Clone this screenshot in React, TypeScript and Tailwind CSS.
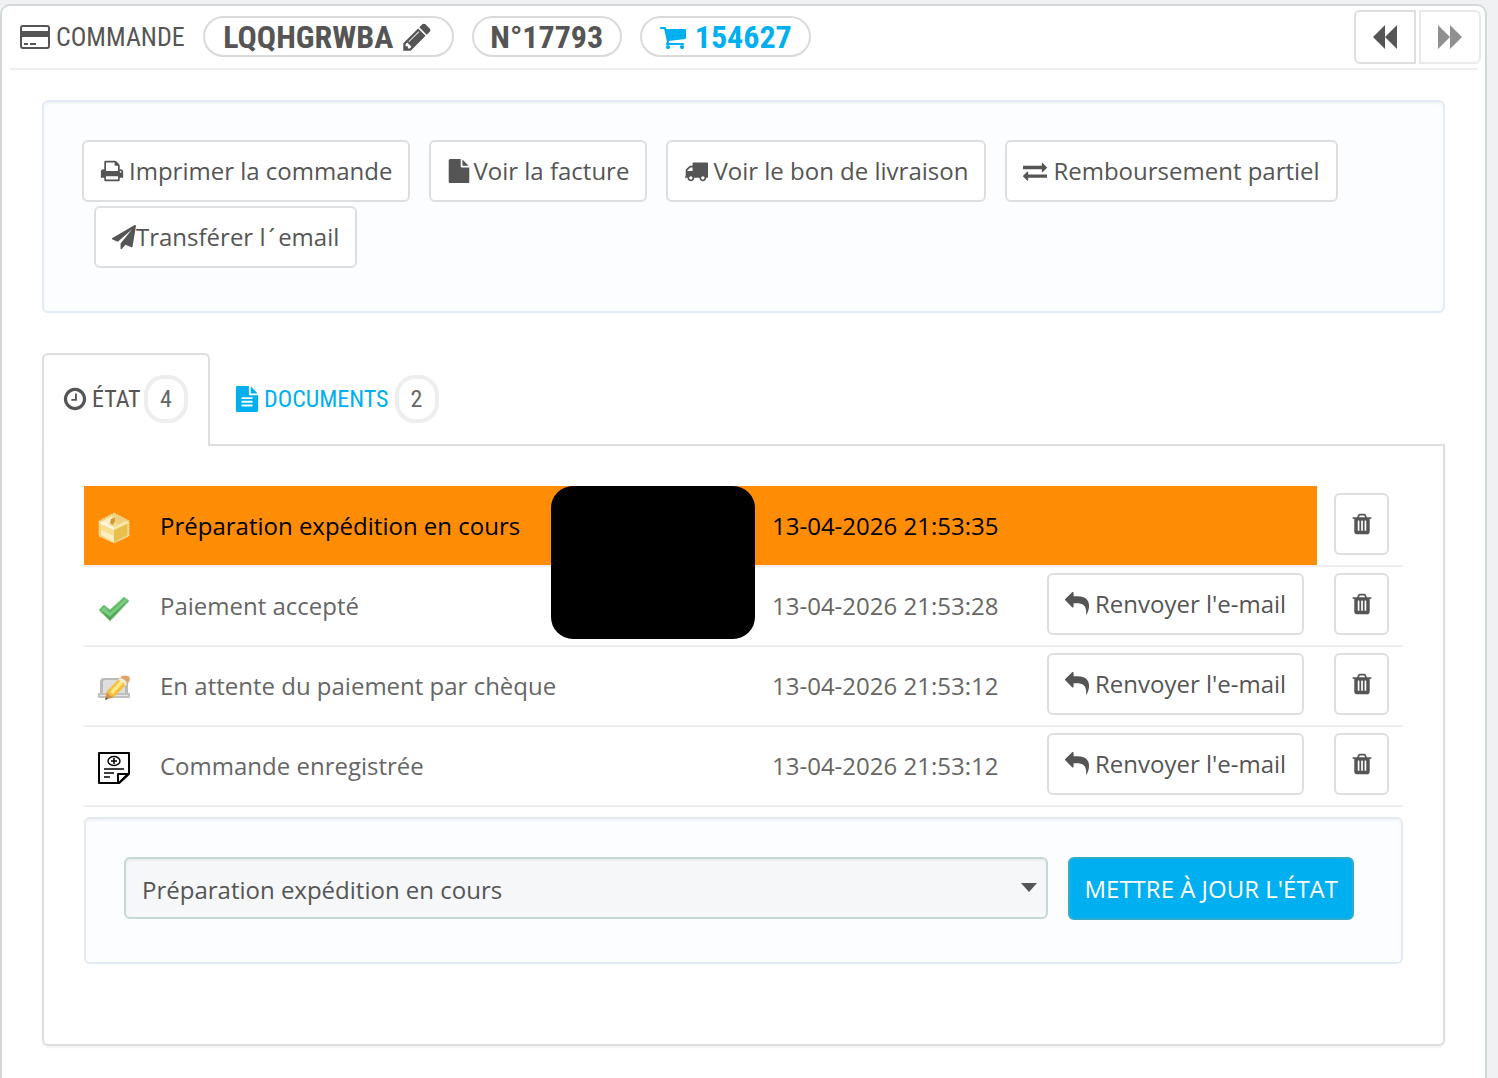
import { useState } from "react";
import type { ReactNode } from "react";

const display = "font-['Ubuntu_Condensed','Roboto_Condensed','Open_Sans_Condensed','Liberation_Sans_Narrow','Open_Sans',sans-serif]";

const glyphs = {
  pencil:
    "M491 1536l91-91-235-235-91 91v107h128v128h107zm523-928q0-22-22-22-10 0-17 7l-542 542q-7 7-7 17 0 22 22 22 10 0 17-7l542-542q7-7 7-17zm-54-192l416 416-832 832h-416v-416zm683 96q0 53-37 90l-166 166-416-416 166-165q36-38 90-38 53 0 91 38l235 234q37 39 37 91z",
  cart:
    "M704 1536q0 52-38 90t-90 38-90-38-38-90 38-90 90-38 90 38 38 90zm896 0q0 52-38 90t-90 38-90-38-38-90 38-90 90-38 90 38 38 90zm128-1088v512q0 24-16.5 42.5t-40.5 21.5l-1044 122q13 60 13 70 0 16-24 64h920q26 0 45 19t19 45-19 45-45 19h-1024q-26 0-45-19t-19-45q0-11 8-31.5t16-36 21.5-40 15.5-29.5l-177-823h-204q-26 0-45-19t-19-45 19-45 45-19h256q16 0 28.5 6.5t19.5 15.5 13 24.5 8 26 5.5 29.5 4.5 26h1201q26 0 45 19t19 45z",
  print:
    "M448 1536h896v-256h-896v256zm0-640h896v-384h-160q-40 0-68-28t-28-68v-160h-640v640zm1152 64q0-26-19-45t-45-19-45 19-19 45 19 45 45 19 45-19 19-45zm128 0v416q0 13-9.5 22.5t-22.5 9.5h-224v160q0 40-28 68t-68 28h-960q-40 0-68-28t-28-68v-160h-224q-13 0-22.5-9.5t-9.5-22.5v-416q0-79 56.5-135.5t135.5-56.5h64v-544q0-40 28-68t68-28h672q40 0 88 20t76 48l152 152q28 28 48 76t20 88v256h64q79 0 135.5 56.5t56.5 135.5z",
  file:
    "M1152 512v-472q22 14 36 28l408 408q14 14 28 36h-472zm-128 32q0 40 28 68t68 28h544v1056q0 40-28 68t-68 28h-1344q-40 0-68-28t-28-68v-1600q0-40 28-68t68-28h800v544z",
  fileText:
    "M1596 476q14 14 28 36h-472v-472q22 14 36 28zm-476 164h544v1056q0 40-28 68t-68 28h-1344q-40 0-68-28t-28-68v-1600q0-40 28-68t68-28h800v544q0 40 28 68t68 28zm160 736v-64q0-14-9-23t-23-9h-704q-14 0-23 9t-9 23v64q0 14 9 23t23 9h704q14 0 23-9t9-23zm0-256v-64q0-14-9-23t-23-9h-704q-14 0-23 9t-9 23v64q0 14 9 23t23 9h704q14 0 23-9t9-23zm0-256v-64q0-14-9-23t-23-9h-704q-14 0-23 9t-9 23v64q0 14 9 23t23 9h704q14 0 23-9t9-23z",
  truck:
    "M640 1408q0-52-38-90t-90-38-90 38-38 90 38 90 90 38 90-38 38-90zm-384-512h384v-256h-158q-13 0-22 9l-195 195q-9 9-9 22v30zm1280 512q0-52-38-90t-90-38-90 38-38 90 38 90 90 38 90-38 38-90zm256-1088v1024q0 15-4 26.5t-13.5 18.5-16.5 11.5-23.5 6-22.5 2-25.5 0-22.5-.5q0 106-75 181t-181 75-181-75-75-181h-384q0 106-75 181t-181 75-181-75-75-181h-64q-3 0-22.5.5t-25.5 0-22.5-2-23.5-6-16.5-11.5-13.5-18.5-4-26.5q0-26 19-45t45-19v-320q0-8-.5-35t0-38 2.5-34.5 6.5-37 14-30.5 22.5-30l198-198q19-19 50.5-32t58.5-13h160v-192q0-26 19-45t45-19h1024q26 0 45 19t19 45z",
  exchange:
    "M1792 1184v192q0 13-9.5 22.5t-22.5 9.5h-1376v192q0 13-9.5 22.5t-22.5 9.5q-12 0-24-10l-319-320q-9-9-9-22 0-14 9-23l320-320q9-9 23-9 13 0 22.5 9.5t9.5 22.5v192h1376q13 0 22.5 9.5t9.5 22.5zm0-544q0 14-9 23l-320 320q-9 9-23 9-13 0-22.5-9.5t-9.5-22.5v-192h-1376q-13 0-22.5-9.5t-9.5-22.5v-192q0-13 9.5-22.5t22.5-9.5h1376v-192q0-14 9-23t23-9q12 0 24 10l319 319q9 9 9 23z",
  plane:
    "M1764 11q33 24 27 64l-256 1536q-5 29-32 45-14 8-31 8-11 0-24-5l-453-185-242 295q-18 23-49 23-13 0-22-4-19-7-30.5-23.5t-11.5-36.5v-349l864-1059-1069 925-395-162q-37-14-40-55-2-40 32-59l1664-960q15-9 32-9 20 0 36 11z",
  clock:
    "M1024 544v448q0 14-9 23t-23 9h-320q-14 0-23-9t-9-23v-64q0-14 9-23t23-9h224v-352q0-14 9-23t23-9h64q14 0 23 9t9 23zm416 352q0-148-73-273t-198-198-273-73-273 73-198 198-73 273 73 273 198 198 273 73 273-73 198-198 73-273zm224 0q0 209-103 385.5t-279.5 279.5-385.5 103-385.5-103-279.5-279.5-103-385.5 103-385.5 279.5-279.5 385.5-103 385.5 103 279.5 279.5 103 385.5z",
  reply:
    "M1792 1120q0 166-127 451-3 7-10.5 24t-13.5 30-13 22q-12 17-28 17-15 0-23.5-10t-8.5-25q0-9 2.5-26.5t2.5-23.5q5-68 5-123C1576 1010 1330 832 864 832h-224v256q0 26-19 45t-45 19-45-19l-512-512q-19-19-19-45t19-45l512-512q19-19 45-19t45 19 19 45v256h224q713 0 875 403 53 134 53 333z",
  trash:
    "M704 1376v-704q0-14-9-23t-23-9h-64q-14 0-23 9t-9 23v704q0 14 9 23t23 9h64q14 0 23-9t9-23zm256 0v-704q0-14-9-23t-23-9h-64q-14 0-23 9t-9 23v704q0 14 9 23t23 9h64q14 0 23-9t9-23zm256 0v-704q0-14-9-23t-23-9h-64q-14 0-23 9t-9 23v704q0 14 9 23t23 9h64q14 0 23-9t9-23zm-544-992h448l-48-117q-7-9-17-11h-317q-10 2-17 11zm928 32v64q0 14-9 23t-23 9h-96v948q0 83-47 143.5t-113 60.5h-832q-66 0-113-58.5t-47-141.5v-952h-96q-14 0-23-9t-9-23v-64q0-14 9-23t23-9h309l70-167q15-37 54-63t79-26h320q40 0 79 26t54 63l70 167h309q14 0 23 9t9 23z",
};

function Icon({ name, className }: { name: keyof typeof glyphs; className: string }) {
  return (
    <svg viewBox="0 0 1792 1792" fill="currentColor" aria-hidden="true" className={`shrink-0 ${className}`}>
      <path d={glyphs[name]} />
    </svg>
  );
}

function CreditCard() {
  return (
    <svg viewBox="0 0 30 24" className="h-6 w-[30px] shrink-0" aria-hidden="true">
      <rect x="1" y="1" width="28" height="22" rx="2" fill="none" stroke="currentColor" strokeWidth="2" />
      <path d="M1 6h28v6H1zM4 18h4v2H4zM10 18h6v2h-6z" fill="currentColor" />
    </svg>
  );
}

function Parcel() {
  return (
    <svg viewBox="0 0 32 32" className="size-8" aria-hidden="true">
      <path d="M16 1 31 9v15l-15 7L1 24V9z" fill="#efd07c" stroke="#f0dca0" strokeWidth="1" strokeDasharray="2 1" />
      <path d="M4 9 15 3l13 6-12 6z" fill="#f2d98e" />
      <path d="M5 9 14 4l-1 7-5 2z" fill="#fbf0cc" />
      <path d="M16 4l11 5-6 3-7-3z" fill="#f0cf78" />
      <path d="M13 7l4-1v3l-2 4-3-2z" fill="#cf9a34" />
      <path d="M3 11l13 6v13L3 23z" fill="#f7df8e" />
      <path d="M16 17l13-6v12l-13 7z" fill="#e9bf4c" />
      <path d="M3 18l13 6v6L3 23z" fill="#fcf3cd" opacity=".8" />
      <path d="M1 11l3-2 12 6v3z" fill="#fdf6dc" />
      <path d="M16 15l12-6 3 2-15 7z" fill="#f8e6aa" />
    </svg>
  );
}

function Check() {
  return (
    <svg viewBox="0 0 32 32" className="size-8" aria-hidden="true">
      <path d="M1 18l5-5 6 5L26 5l5 4-19 20z" fill="#5fb865" stroke="#8fcf92" strokeWidth="1" strokeLinejoin="round" />
      <path d="M3 18l3-3 6 6L27 7l2 2-17 15z" fill="#7fcb83" />
      <path d="M4 19l8 6L30 9l-18 19z" fill="#4da653" />
    </svg>
  );
}

function Cheque() {
  return (
    <svg viewBox="0 0 32 32" className="size-8" aria-hidden="true">
      <path d="M2 10q0-4 4-4h20q4 0 4 4v13H2z" fill="#b9b9b9" />
      <path d="M5 10q0-2 2-2h18q2 0 2 2v11H5z" fill="#dedede" />
      <path d="M0 21h32v4q0 1-1 1H1q-1 0-1-1z" fill="#c2c0bc" />
      <path d="M2 23h28v1H2z" fill="#e6e4e0" />
      <path d="M9 19 21 7q6 0 7 6L16 25q-6 0-7-6z" fill="#f3bf3c" />
      <path d="M12 20 23 8l3 2-11 12z" fill="#fde987" />
      <path d="M21 7l3-3q3-1 6 0t1 6l-3 3q-1-6-7-6z" fill="#e2a06a" />
      <path d="M20 8l2-2q6 1 7 6l-2 2q-1-5-7-6z" fill="#f6ead8" />
      <path d="M9 19q1 5 7 6l-6 2q-3 0-2-3z" fill="#d98f45" />
      <path d="M8 25l2 2-3 1z" fill="#5e4630" />
    </svg>
  );
}

function Note() {
  return (
    <svg viewBox="0 0 32 32" className="size-8" fill="none" stroke="#000" aria-hidden="true">
      <path d="M1 1h30v20L21 31H1z" strokeWidth="2" strokeLinejoin="round" />
      <path d="M20 31v-9h11L21 31" strokeWidth="2" strokeLinejoin="round" />
      <ellipse cx="16" cy="9" rx="6" ry="4.500" strokeWidth="1.400" />
      <path d="M16 6v6M13 9h6M6 17h20M6 21h10M6 25h6" strokeWidth="1.500" />
    </svg>
  );
}

function OutlineButton({ children, label, className = "px-4" }: { children: ReactNode; label?: string; className?: string }) {
  return (
    <button
      type="button"
      aria-label={label}
      className={`inline-flex h-[62px] items-center whitespace-nowrap rounded-md border-2 border-[#dedede] bg-white text-2xl text-[#555] ${className}`}
    >
      {children}
    </button>
  );
}

const history = [
  { label: "Préparation expédition en cours", date: "13-04-2026 21:53:35", icon: <Parcel />, current: true },
  { label: "Paiement accepté", date: "13-04-2026 21:53:28", icon: <Check />, current: false },
  { label: "En attente du paiement par chèque", date: "13-04-2026 21:53:12", icon: <Cheque />, current: false },
  { label: "Commande enregistrée", date: "13-04-2026 21:53:12", icon: <Note />, current: false },
];

const pill = "flex h-[41px] items-center justify-center rounded-full border-2 border-[#dadada] font-bold";
const count = "flex h-12 w-11 items-center justify-center rounded-[20px] border-4 border-[#eee] text-[#666]";
const well = "rounded-md border-2 border-[#e1eaf5] bg-[#fcfdfe] shadow-[inset_0_2px_2px_rgba(0,0,0,0.04)]";

export default function App() {
  const [state, setState] = useState("Préparation expédition en cours");

  return (
    <div className="flex min-h-screen flex-col bg-[#eff1f3] pt-1 pr-[11px] font-['Open_Sans','Noto_Sans',sans-serif] text-[#555]">
      <main className="flex-1 rounded-t-[10px] border-2 border-b-0 border-[#d3d8db] bg-white">
        <header className="mx-2 flex h-16 items-start border-b-2 border-[#eee] pl-[10px]">
          <h1 className={`mt-2 mr-[18px] flex h-[46px] items-center gap-[6px] text-[26px] ${display}`}>
            <CreditCard />
            COMMANDE
          </h1>
          <div className={`mt-[10px] flex gap-[18px] text-[32px] ${display}`}>
            <span className={`${pill} w-[251px] gap-2`}>
              LQQHGRWBA
              <Icon name="pencil" className="size-8" />
            </span>
            <span className={`${pill} w-[150px]`}>N°17793</span>
            <a href="#panier" className={`${pill} w-[171px] gap-2 text-[#00aff0]`}>
              <Icon name="cart" className="size-7" />
              154627
            </a>
          </div>
          <nav className="mt-1 -mr-1 ml-auto flex gap-[3px]">
            <button type="button" aria-label="Commande précédente" className="flex h-[54px] w-[62px] items-center justify-center rounded-l-md border-2 border-[#dedede]">
              <svg viewBox="0 0 24 24" className="size-6" fill="currentColor" aria-hidden="true">
                <path d="M12 0v24L0 12zM24 0v24L12 12z" />
              </svg>
            </button>
            <button type="button" disabled aria-label="Commande suivante" className="flex h-[54px] w-[62px] items-center justify-center rounded-r-md border-2 border-[#dedede] opacity-65">
              <svg viewBox="0 0 24 24" className="size-6" fill="currentColor" aria-hidden="true">
                <path d="M0 0v24l12-12zM12 0v24l12-12z" />
              </svg>
            </button>
          </nav>
        </header>

        <div className="mx-10 mt-[30px]">
          <section className={`${well} flex flex-wrap gap-x-[19px] gap-y-1 px-[38px] pt-[38px] pb-[43px]`}>
            <OutlineButton>
              <Icon name="print" className="mr-[5px] size-6" />
              Imprimer la commande
            </OutlineButton>
            <OutlineButton>
              <Icon name="file" className="mr-[2px] size-6" />
              Voir la facture
            </OutlineButton>
            <OutlineButton>
              <Icon name="truck" className="mr-[5px] size-6" />
              Voir le bon de livraison
            </OutlineButton>
            <OutlineButton>
              <Icon name="exchange" className="mr-[6px] size-6" />
              Remboursement partiel
            </OutlineButton>
            <OutlineButton className="ml-3 px-4">
              <Icon name="plane" className="size-6" />
              <span>
                Transférer l<span className="mx-[3px]">´</span>email
              </span>
            </OutlineButton>
          </section>

          <div role="tablist" className={`mt-10 flex items-start text-2xl ${display}`}>
            <button type="button" role="tab" aria-selected="true" className="relative z-10 -mb-0.5 flex h-[93px] w-[168px] items-center rounded-t-md border-2 border-b-0 border-[#dedede] bg-white pr-5 pb-1 pl-[18px]">
              <Icon name="clock" className="mr-1 size-[26px]" />
              ÉTAT
              <span className={`${count} ml-auto`}>4</span>
            </button>
            <button type="button" role="tab" aria-selected="false" className="flex h-[91px] items-center pl-6 text-[#00aff0]">
              <Icon name="fileText" className="mr-1 size-[26px]" />
              DOCUMENTS
              <span className={`${count} ml-[6px]`}>2</span>
            </button>
          </div>

          <section className="rounded-b-md border-2 border-[#dedede] px-10 pt-10 pb-20 shadow-[0_2px_2px_rgba(0,0,0,0.05)]">
            <div className="relative">
              <table className="w-full table-fixed border-collapse text-2xl text-[#666]">
                <colgroup>
                  <col className="w-[62px]" />
                  <col />
                  <col className="w-[200px]" />
                  <col className="w-[275px]" />
                  <col className="w-[284px]" />
                  <col className="w-[86px]" />
                </colgroup>
                <tbody>
                  {history.map((row) => (
                    <tr key={row.label} className="h-20 border-b-2 border-[#eee]">
                      <td className={row.current ? "bg-[#ff8c05] pt-1 pl-[14px]" : "pt-1 pl-[14px]"}>{row.icon}</td>
                      <td className={row.current ? "whitespace-nowrap bg-[#ff8c05] pl-[14px] text-black" : "whitespace-nowrap pl-[14px]"}>{row.label}</td>
                      <td className={row.current ? "bg-[#ff8c05]" : ""} />
                      <td className={row.current ? "whitespace-nowrap bg-[#ff8c05] pl-[14px] text-black" : "whitespace-nowrap pl-[14px]"}>{row.date}</td>
                      <td className={row.current ? "bg-[#ff8c05]" : "pb-1 pl-[14px]"}>
                        {!row.current && (
                          <OutlineButton>
                            <Icon name="reply" className="mr-[6px] size-6" />
                            Renvoyer l'e-mail
                          </OutlineButton>
                        )}
                      </td>
                      <td className="pr-[14px] pb-1 text-right">
                        <OutlineButton label="Supprimer" className="w-[55px] justify-center">
                          <Icon name="trash" className="size-6" />
                        </OutlineButton>
                      </td>
                    </tr>
                  ))}
                </tbody>
              </table>
              <div className="absolute top-0 right-[648px] h-[153px] w-[204px] rounded-[22px] bg-black" />
            </div>

            <form className={`${well} mt-[10px] flex gap-5 pt-[38px] pr-[47px] pb-[42px] pl-[38px]`} onSubmit={(e) => e.preventDefault()}>
              <div className="relative flex-1">
                <select
                  aria-label="État de la commande"
                  value={state}
                  onChange={(e) => setState(e.target.value)}
                  className="h-[62px] w-full appearance-none rounded-md border-2 border-[#c7d6db] bg-[#f5f7f9] px-4 pt-1 text-2xl shadow-[inset_0_2px_2px_rgba(0,0,0,0.05)]"
                >
                  {history.map((row) => (
                    <option key={row.label}>{row.label}</option>
                  ))}
                </select>
                <svg viewBox="0 0 16 9" className="pointer-events-none absolute top-[26px] right-[11px] h-[9px] w-4" fill="currentColor" aria-hidden="true">
                  <path d="M0 0h16L8 9z" />
                </svg>
              </div>
              <button type="submit" className="h-[63px] rounded-md border-2 border-[#2eacce] bg-[#00aff0] px-[14px] text-2xl text-white">
                METTRE À JOUR L'ÉTAT
              </button>
            </form>
          </section>
        </div>
      </main>
    </div>
  );
}
